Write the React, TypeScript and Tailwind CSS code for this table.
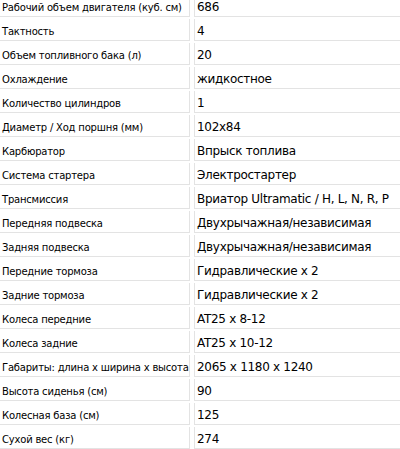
import React from "react";

const specs: [string, string][] = [
  ["Рабочий объем двигателя (куб. см)", "686"],
  ["Тактность", "4"],
  ["Объем топливного бака (л)", "20"],
  ["Охлаждение", "жидкостное"],
  ["Количество цилиндров", "1"],
  ["Диаметр / Ход поршня (мм)", "102x84"],
  ["Карбюратор", "Впрыск топлива"],
  ["Система стартера", "Электростартер"],
  ["Трансмиссия", "Вриатор Ultramatic / H, L, N, R, P"],
  ["Передняя подвеска", "Двухрычажная/независимая"],
  ["Задняя подвеска", "Двухрычажная/независимая"],
  ["Передние тормоза", "Гидравлические x 2"],
  ["Задние тормоза", "Гидравлические x 2"],
  ["Колеса передние", "AT25 x 8-12"],
  ["Колеса задние", "AT25 x 10-12"],
  ["Габариты: длина x ширина x высота", "2065 x 1180 x 1240"],
  ["Высота сиденья (см)", "90"],
  ["Колесная база (см)", "125"],
  ["Сухой вес (кг)", "274"],
];

export default function App() {
  return (
    <div className="w-[400px] h-[449px] overflow-hidden bg-white font-['DejaVu_Sans',Verdana,sans-serif] text-black">
      <div className="-mt-[5px] flex flex-col gap-[2px]">
        {specs.map(([label, value]) => (
          <div key={label} className="flex gap-[4px]">
            <div className="w-[190px] h-[22px] shrink-0 flex items-center pt-[3px] pl-[2px] text-[10px] tracking-[-0.2px] border-r border-b border-[#e3e3e3] whitespace-nowrap">
              {label}
            </div>
            <div className="w-[260px] h-[22px] shrink-0 flex items-center pt-[2px] pl-[2px] text-[12px] tracking-[-0.3px] border-l border-b border-[#e3e3e3] whitespace-nowrap">
              {value}
            </div>
          </div>
        ))}
      </div>
    </div>
  );
}
